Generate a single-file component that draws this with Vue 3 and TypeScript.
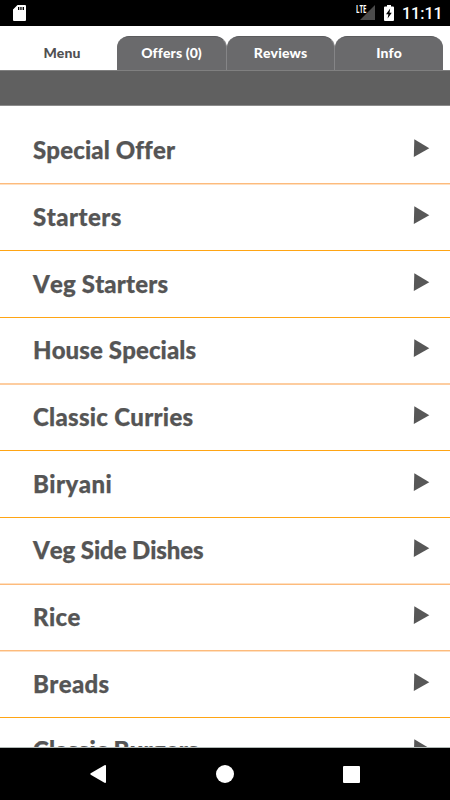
<script setup lang="ts">
interface Category { name: string; height: number; top: number; tracking: number; line: 'solid' | 'upper' | 'lower' | 'even' }
const tabs: string[] = ['Menu', 'Offers (0)', 'Reviews', 'Info']
const categories: Category[] = [
  { name: 'Special Offer', height: 67, top: 17, tracking: 0.12, line: 'upper' },
  { name: 'Starters', height: 66, top: 17, tracking: 0.45, line: 'solid' },
  { name: 'Veg Starters', height: 67, top: 18, tracking: 0.15, line: 'solid' },
  { name: 'House Specials', height: 67, top: 17, tracking: 0.1, line: 'even' },
  { name: 'Classic Curries', height: 66, top: 17, tracking: 0.28, line: 'solid' },
  { name: 'Biryani', height: 67, top: 18, tracking: 0.45, line: 'solid' },
  { name: 'Veg Side Dishes', height: 67, top: 17, tracking: -0.1, line: 'lower' },
  { name: 'Rice', height: 67, top: 17, tracking: 0.35, line: 'upper' },
  { name: 'Breads', height: 66, top: 17, tracking: 0.35, line: 'solid' },
  { name: 'Classic Burgers', height: 67, top: 17, tracking: 0.2, line: 'solid' },
]
</script>

<template>
  <div class="screen">
    <header class="status">
      <svg class="sd" width="13" height="16" viewBox="0 0 13 16"><path fill="#fff" fill-rule="evenodd" d="M4.5 0H12a1 1 0 0 1 1 1v14a1 1 0 0 1-1 1H1a1 1 0 0 1-1-1V4.5zM5 2v3h1.3V2zm2.3 0v3h1.3V2zm2.3 0v3h1.4V2z" /></svg>
      <div class="signal">
        <span class="lte">LTE</span>
        <svg width="15" height="15" viewBox="0 0 15 15"><path fill="#4b4b4b" d="M15 0v15H0z" /></svg>
      </div>
      <svg class="battery" width="10" height="16" viewBox="0 0 10 16"><path fill="#fff" d="M3 0h4v1.5h2a1 1 0 0 1 1 1V15a1 1 0 0 1-1 1H1a1 1 0 0 1-1-1V2.500a1 1 0 0 1 1-1h2z" /><path fill="#000" d="M6.200 3.500 2 9.200h2.400l-.8 4.300L7.800 7.800H5.500z" /></svg>
      <span class="clock">11:11</span>
    </header>
    <nav class="tabs">
      <button v-for="(tab, i) in tabs" :key="tab" class="tab" :class="{ active: i === 0 }">{{ tab }}</button>
    </nav>
    <div class="band"></div>
    <main class="list">
      <div v-for="c in categories" :key="c.name" class="row" :class="c.line" :style="{ height: c.height + 'px', paddingTop: c.top + 'px' }">
        <span :style="{ letterSpacing: c.tracking + 'px' }">{{ c.name }}</span>
        <svg width="17" height="18" viewBox="0 0 17 18"><path fill="#575757" d="M1.300 .3 16.300 9.200 .8 18z" /></svg>
      </div>
    </main>
    <footer class="navbar">
      <svg width="16" height="18" viewBox="0 0 16 18"><path fill="#fff" d="M14.500.2Q16-.2 16 1v16q0 1.200-1.500.8L.7 9.700Q0 9 .7 8.300z" /></svg>
      <svg width="18" height="18" viewBox="0 0 18 18"><circle cx="9" cy="9" r="9" fill="#fff" /></svg>
      <svg width="17" height="17" viewBox="0 0 17 17"><rect width="17" height="17" rx="1" fill="#fff" /></svg>
    </footer>
  </div>
</template>

<style>
body { margin: 0; }
</style>
<style scoped>
.screen { width: 450px; height: 800px; display: flex; flex-direction: column; overflow: hidden; background: #fff; font-family: Lato, sans-serif; font-kerning: none; font-variant-ligatures: none; }
.status { box-sizing: border-box; height: 26px; flex: none; background: #000; color: #fff; display: flex; align-items: flex-start; padding: 5px 10px 0 13px; }
.signal { display: flex; width: 19px; margin-left: auto; }
.signal svg { flex: none; margin-left: -14px; }
.lte { width: 18px; flex: none; font: 700 11px/8px "Open Sans", sans-serif; transform: scaleX(.56); transform-origin: left; }
.battery { margin-left: 9px; }
.clock { width: 38px; margin-left: 8px; font: 500 16px/18px Roboto, sans-serif; white-space: nowrap; }
.tabs { box-sizing: border-box; height: 45px; flex: none; display: grid; grid-template-columns: 109px 110px 108px 108px; padding: 10px 0 0 8px; border-bottom: 1px solid #808080; }
.tab { box-sizing: border-box; border: 0; border-top: 1px solid #5b5b5d; border-right: 1px solid #858587; border-radius: 12px 12px 0 0; background: #6a6a6c; color: #fff; font: 900 14px/17px Lato, sans-serif; font-kerning: none; font-variant-ligatures: none; letter-spacing: .1px; padding: 0 0 3px; }
.tab:last-child { border-right: 0; }
.tab.active { background: #fff; color: #505052; border-color: transparent; }
.band { box-sizing: border-box; height: 35px; flex: none; background: #606060; border-bottom: 1px solid #8c8c8c; }
.list { flex: 1; min-height: 0; overflow: hidden; padding-top: 12px; }
.row { box-sizing: border-box; display: flex; justify-content: space-between; align-items: flex-start; padding: 17px 20px 0 33px; border-bottom: 1px solid #ffa514; color: #555; font-size: 24px; line-height: 30px; font-weight: 900; -webkit-text-stroke: .25px #555; }
.row.upper { border-bottom-color: #fee0c2; box-shadow: inset 0 -1px #fdbb7c; }
.row.lower { border-bottom-color: #fdbb7c; box-shadow: inset 0 -1px #fee0c2; }
.row.even { border-bottom-color: #fdcda0; box-shadow: inset 0 -1px #fdcda0; }
.row svg { margin-top: 4px; }
.navbar { box-sizing: border-box; height: 52px; flex: none; background: #000; display: flex; align-items: center; justify-content: space-between; padding: 0 90px; box-shadow: 0 -1px #b0b8b5; position: relative; }
</style>
